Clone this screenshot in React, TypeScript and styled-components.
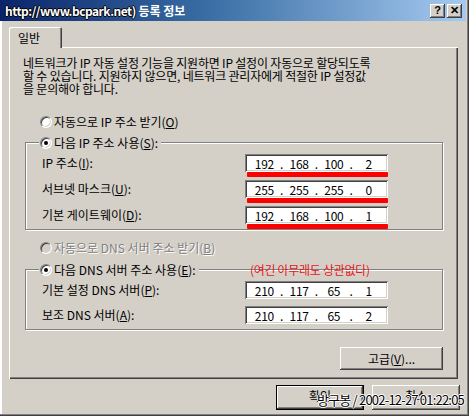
import React from 'react';
import styled, { createGlobalStyle, css } from 'styled-components';

const FONT = `"Noto Sans CJK KR", "Liberation Sans", sans-serif`;

const GlobalStyle = createGlobalStyle`
  html, body { margin: 0; padding: 0; background: #d4d0c8; }
  body { font-family: ${FONT}; font-size: 12px; color: #000; }
  * { box-sizing: border-box; }
`;

const raised = css`
  background: #d4d0c8;
  box-shadow: inset -1px -1px #404040, inset 1px 1px #fff, inset -2px -2px #808080;
`;

const sunken = css`
  background: #fff;
  box-shadow: inset 1px 1px #808080, inset -1px -1px #fff, inset 2px 2px #404040,
    inset -2px -2px #d4d0c8;
`;

const Window = styled.div`
  position: relative;
  width: 469px;
  height: 416px;
  background: #d4d0c8;
  box-shadow: inset -1px -1px #404040, inset -2px -2px #808080, inset 2px 0 #fff;
  display: flex;
  flex-direction: column;
  overflow: hidden;
`;

const TitleBar = styled.div`
  height: 21px;
  margin-right: 3px;
  display: flex;
  align-items: center;
  padding: 0 4px 0 5px;
  background: linear-gradient(to right, #0a246a 0%, #3a6ea5 45%, #a6caf0 100%);
`;

const TitleText = styled.div`
  color: #fff;
  font-weight: bold;
  font-size: 12px;
  white-space: nowrap;
`;

const Stamp = styled.span`
  color: #fff;
  letter-spacing: -0.5px;
  text-shadow: 1px 0 #000, -1px 0 #000, 0 1px #000, 0 -1px #000;
`;

const CaptionButtons = styled.div`
  margin-left: auto;
  display: flex;
  gap: 2px;
`;

const CaptionButton = styled.div`
  ${raised};
  width: 15px;
  height: 14px;
  display: flex;
  align-items: center;
  justify-content: center;
  font-family: "Liberation Sans", sans-serif;
  font-weight: bold;
  font-size: 11px;
  line-height: 1;
`;

const Body = styled.div`
  padding: 6px 0 0 9px;
`;

const TabStrip = styled.div`
  display: flex;
  height: 20px;
`;

const Tab = styled.div`
  position: relative;
  z-index: 1;
  width: 53px;
  height: 21px;
  padding: 2px 0 0 9px;
  background: #d4d0c8;
  border-radius: 2px 2px 0 0;
  box-shadow: inset 1px 1px #fff, inset -1px 0 #404040, inset -2px 0 #808080;
`;

const Panel = styled.div`
  width: 449px;
  height: 332px;
  display: flex;
  flex-direction: column;
  padding: 9px 0 0 0;
  box-shadow: inset 1px 1px #fff, inset -1px -1px #404040, inset -2px -2px #808080;
`;

const Description = styled.p`
  margin: 0 0 0 14px;
  line-height: 13px;
  white-space: nowrap;
  letter-spacing: -0.2px;
`;

const RadioRow = styled.label<{ $disabled?: boolean }>`
  display: flex;
  align-items: center;
  gap: 2px;
  height: 13px;
  margin-left: 31px;
  white-space: nowrap;
  color: ${p => (p.$disabled ? '#808080' : '#000')};
  text-shadow: ${p => (p.$disabled ? '1px 1px #fff' : 'none')};
`;

const RadioMark = styled.span<{ $checked?: boolean; $disabled?: boolean }>`
  position: relative;
  flex: none;
  width: 12px;
  height: 12px;
  border-radius: 50%;
  background: ${p => (p.$disabled ? '#d4d0c8' : '#fff')};
  border: 1px solid;
  border-color: #808080 #fff #fff #808080;
  box-shadow: inset 1px 1px #404040, inset -1px -1px #d4d0c8;
  &::after {
    content: '';
    display: ${p => (p.$checked ? 'block' : 'none')};
    position: absolute;
    left: 3px;
    top: 3px;
    width: 4px;
    height: 4px;
    border-radius: 50%;
    background: #000;
  }
`;

const Spacer = styled.div<{ $h: number }>`
  flex: none;
  height: ${p => p.$h}px;
`;

const GroupBox = styled.div<{ $gap: number; $bottom?: number }>`
  position: relative;
  margin: 0 15px 0 16px;
  padding: 11px 0 ${p => p.$bottom ?? 0}px 16px;
  border: 1px solid #808080;
  box-shadow: inset 1px 1px #fff, 1px 1px #fff;
  display: flex;
  flex-direction: column;
  gap: ${p => p.$gap}px;
`;

const Legend = styled.div`
  position: absolute;
  top: -7px;
  left: 13px;
  padding: 0 3px 0 1px;
  background: #d4d0c8;
  & > label {
    margin-left: 0;
  }
`;

const FieldRow = styled.div`
  display: grid;
  grid-template-columns: 203px 143px;
  align-items: start;
`;

const FieldLabel = styled.span`
  line-height: 17px;
  white-space: nowrap;
`;

const FieldStack = styled.div`
  display: flex;
  flex-direction: column;
`;

const IpBox = styled.div`
  ${sunken};
  width: 143px;
  height: 18px;
  display: flex;
  align-items: center;
  padding: 0 2px;
  font-size: 12px;
`;

const Octet = styled.span`
  width: 35px;
  text-align: center;
  letter-spacing: -0.3px;
`;

const Dot = styled.span`
  width: 0;
  display: flex;
  justify-content: center;
`;

const Marker = styled.div`
  width: 141px;
  height: 5px;
  margin-left: 2px;
  background: #f00;
  border-radius: 1px;
`;

const Note = styled.div`
  position: absolute;
  top: -9px;
  left: 224px;
  color: #e8141c;
  white-space: nowrap;
  letter-spacing: -0.3px;
`;

const PushButton = styled.div<{ $width: number; $height: number; $default?: boolean }>`
  width: ${p => p.$width}px;
  height: ${p => p.$height}px;
  display: flex;
  align-items: center;
  justify-content: center;
  background: #d4d0c8;
  box-shadow: ${p =>
    p.$default
      ? 'inset 0 0 0 1px #000, inset -2px -2px #404040, inset 2px 2px #fff, inset -3px -3px #808080'
      : 'inset -1px -1px #404040, inset 1px 1px #fff, inset -2px -2px #808080'};
`;

const AdvancedButton = styled(PushButton)`
  align-self: flex-end;
  margin: 17px 15px 0 0;
`;

const DialogButton = styled(PushButton)`
  padding-bottom: 5px;
`;

const ButtonBar = styled.div`
  display: flex;
  justify-content: flex-end;
  gap: 8px;
  margin-top: 6px;
  padding-right: 9px;
`;

const Signature = styled.div`
  position: absolute;
  right: 5px;
  bottom: 7px;
  font-size: 13px;
  letter-spacing: -0.8px;
  color: #000;
  white-space: nowrap;
  text-shadow: 1px 0 #fff, -1px 0 #fff, 0 1px #fff, 0 -1px #fff;
`;

function Radio({ label, checked, disabled }: { label: React.ReactNode; checked?: boolean; disabled?: boolean }) {
  return (
    <RadioRow $disabled={disabled}>
      <RadioMark $checked={checked} $disabled={disabled} />
      <span>{label}</span>
    </RadioRow>
  );
}

function IpField({ value }: { value: string }) {
  const parts = value.split('.');
  return (
    <IpBox>
      {parts.map((p, i) => (
        <React.Fragment key={i}>
          {i > 0 && <Dot>.</Dot>}
          <Octet>{p}</Octet>
        </React.Fragment>
      ))}
    </IpBox>
  );
}

function Field({ label, value, marked }: { label: React.ReactNode; value: string; marked?: boolean }) {
  return (
    <FieldRow>
      <FieldLabel>{label}</FieldLabel>
      <FieldStack>
        <IpField value={value} />
        {marked && <Marker />}
      </FieldStack>
    </FieldRow>
  );
}

export default function App() {
  return (
    <>
      <GlobalStyle />
      <Window>
        <TitleBar>
          <TitleText>
            <Stamp>http://www.bcpark.net)</Stamp> 등록 정보
          </TitleText>
          <CaptionButtons>
            <CaptionButton>?</CaptionButton>
            <CaptionButton>✕</CaptionButton>
          </CaptionButtons>
        </TitleBar>

        <Body>
          <TabStrip>
            <Tab>일반</Tab>
          </TabStrip>
          <Panel>
            <Description>
              네트워크가 IP 자동 설정 기능을 지원하면 IP 설정이 자동으로 할당되도록
              <br />할 수 있습니다. 지원하지 않으면, 네트워크 관리자에게 적절한 IP 설정값
              <br />을 문의해야 합니다.
            </Description>

            <Spacer $h={20} />
            <Radio label={<>자동으로 IP 주소 받기(<u>O</u>)</>} />
            <Spacer $h={14} />

            <GroupBox $gap={3}>
              <Legend>
                <Radio checked label={<>다음 IP 주소 사용(<u>S</u>):</>} />
              </Legend>
              <Field label={<>IP 주소(<u>I</u>):</>} value="192.168.100.2" marked />
              <Field label={<>서브넷 마스크(<u>U</u>):</>} value="255.255.255.0" marked />
              <Field label={<>기본 게이트웨이(<u>D</u>):</>} value="192.168.100.1" marked />
            </GroupBox>

            <Spacer $h={11} />
            <Radio disabled label={<>자동으로 DNS 서버 주소 받기(<u>B</u>)</>} />
            <Spacer $h={15} />

            <GroupBox $gap={7} $bottom={5}>
              <Legend>
                <Radio checked label={<>다음 DNS 서버 주소 사용(<u>E</u>):</>} />
              </Legend>
              <Note>(여긴 아무래도 상관없다)</Note>
              <Field label={<>기본 설정 DNS 서버(<u>P</u>):</>} value="210.117.65.1" />
              <Field label={<>보조 DNS 서버(<u>A</u>):</>} value="210.117.65.2" />
            </GroupBox>

            <AdvancedButton $width={103} $height={23}>
              고급(<u>V</u>)...
            </AdvancedButton>
          </Panel>

          <ButtonBar>
            <DialogButton $width={88} $height={25} $default>
              확인
            </DialogButton>
            <DialogButton $width={88} $height={25}>
              취소
            </DialogButton>
          </ButtonBar>
        </Body>

        <Signature>방구봉 / 2002-12-27 01:22:05</Signature>
      </Window>
    </>
  );
}
